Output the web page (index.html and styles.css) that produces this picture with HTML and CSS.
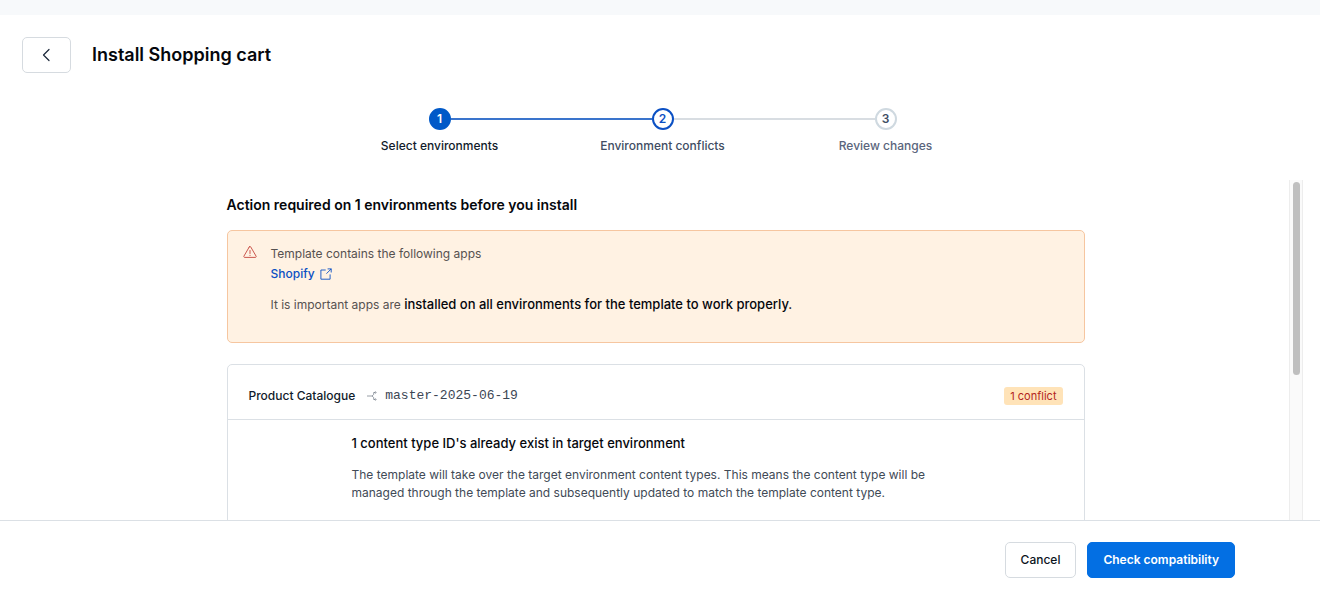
FILE: index.html
```html
<!DOCTYPE html>
<html lang="en">
<head>
<meta charset="utf-8">
<meta name="viewport" content="width=device-width, initial-scale=1">
<title>Install Shopping cart</title>
<link rel="stylesheet" href="styles.css">
</head>
<body>
<div class="backdrop"></div>
<header class="header">
  <button class="btn btn-back" type="button" aria-label="Back">
    <svg width="16" height="16" viewBox="0 0 16 16" fill="none" stroke="currentColor" stroke-width="1.2" stroke-linecap="round" stroke-linejoin="round"><path d="M10 2.500 4.500 8l5.500 5.500"/></svg>
  </button>
  <h1 class="title">Install Shopping cart</h1>
</header>
<ol class="stepper">
  <li class="step step-active">
    <div class="rail"><span class="line line-none"></span><span class="dot">1</span><span class="line line-done"></span></div>
    <span class="step-label">Select environments</span>
  </li>
  <li class="step step-next">
    <div class="rail"><span class="line line-done"></span><span class="dot">2</span><span class="line"></span></div>
    <span class="step-label">Environment conflicts</span>
  </li>
  <li class="step">
    <div class="rail"><span class="line"></span><span class="dot">3</span><span class="line line-none"></span></div>
    <span class="step-label">Review changes</span>
  </li>
</ol>
<div class="viewport">
  <main class="content">
    <h2 class="heading">Action required on 1 environments before you install</h2>
    <section class="note">
      <svg class="note-icon" width="14" height="16" viewBox="0 -1 14 16" fill="none" stroke="currentColor" stroke-width=".9" stroke-linecap="round" stroke-linejoin="round"><path d="M6.300 1.900.9 11.200a.8.8 0 0 0 .7 1.200h10.800a.8.8 0 0 0 .7-1.200L7.700 1.900a.8.8 0 0 0-1.400 0Z"/><path d="M7 5.500v3M7 10.300v.2"/></svg>
      <div>
        <p class="note-text">Template contains the following apps</p>
        <a class="link" href="#shopify">Shopify
          <svg width="12" height="12" viewBox="0 0 12 12" fill="none" stroke="currentColor" stroke-width=".9" stroke-linecap="round" stroke-linejoin="round"><path d="M8 .9h3.200v3.200M6.700 5.400l4.400-4.400M5.300 2H.9v9.200h9.200V6.800"/></svg>
        </a>
        <p class="note-text note-last">It is important apps are <strong>installed on all environments for the template to work properly.</strong></p>
      </div>
    </section>
    <section class="card">
      <div class="card-head">
        <span class="space">Product Catalogue</span>
        <svg class="branch" width="10" height="10" viewBox="0 0 10 10" fill="none" stroke="currentColor" stroke-width=".8"><path d="M0 5h5M8 1.500H6.700V3.500L5 5l1.700 1.500v2H8"/><circle cx="8.400" cy="1.500" r=".7"/><circle cx="8.400" cy="8.500" r=".7"/></svg>
        <span class="env">master-2025-06-19</span>
        <span class="badge">1 conflict</span>
      </div>
      <div class="card-body">
        <h3 class="card-title">1 content type ID's already exist in target environment</h3>
        <p class="card-text">The template will take over the target environment content types. This means the content type will be managed through the template and subsequently updated to match the template content type.</p>
      </div>
    </section>
  </main>
  <div class="track"><div class="thumb"></div></div>
</div>
<footer class="footer">
  <button class="btn" type="button">Cancel</button>
  <button class="btn btn-primary" type="button">Check compatibility</button>
</footer>
</body>
</html>
```
FILE: styles.css
```css
* { box-sizing: border-box; margin: 0; padding: 0; }
body {
  display: flex;
  flex-direction: column;
  height: 100vh;
  background: #fff;
  color: #0c141c;
  font: 400 12px/18px Inter, "Liberation Sans", sans-serif;
}
.backdrop { flex: none; height: 15px; background: #f7f9fb; }
.header { display: flex; align-items: center; gap: 21px; padding: 22px 22px 0; }
.title { font-size: 18px; line-height: 24px; font-weight: 600; color: #05070c; }
.btn {
  display: inline-flex;
  align-items: center;
  justify-content: center;
  height: 36px;
  padding: 0 15px;
  border: 1px solid #d6dbe0;
  border-radius: 5px;
  background: #fff;
  color: #0c141c;
  font: inherit;
  font-weight: 500;
}
.btn-back { width: 49px; padding: 0; color: #1b273a; }
.btn-primary { border-color: #036fe3; background: #036fe3; color: #fff; font-weight: 600; }
.stepper {
  display: grid;
  grid-template-columns: repeat(3, 223px);
  justify-content: center;
  margin: 35px 17px 0 22px;
  list-style: none;
}
.step { text-align: center; color: #5a657c; }
.step-label { font-weight: 500; }
.rail { display: flex; align-items: center; margin-bottom: 7px; }
.line { flex: 1; height: 2px; background: #d8dde2; }
.line-done { background: #3a74cc; }
.line-none { background: none; }
.dot {
  width: 22px;
  height: 22px;
  border: 2px solid #cfd9e0;
  border-radius: 50%;
  font-weight: 600;
  color: #414d63;
}
.step-active { color: #111b2b; }
.step-active .dot { border-color: #0059c8; background: #0059c8; color: #fff; }
.step-next { color: #414d63; }
.step-next .dot { border-color: #0b50c4; color: #0b50c4; }
.viewport { display: flex; flex: 1; min-height: 0; margin: 25px 17px 0 22px; overflow: hidden; }
.content { flex: 1; max-width: 858px; margin: 0 auto; padding-top: 15px; }
.heading { font-size: 14px; line-height: 20px; font-weight: 600; color: #05070c; }
.note {
  display: flex;
  gap: 14px;
  margin-top: 15px;
  padding: 13px 15px 27px;
  border: 1px solid #f6c6a0;
  border-radius: 5px;
  background: #fff2e3;
}
.note-icon { flex: none; color: #c4453c; }
.note-text { line-height: 20px; color: #565150; }
.note-last { margin-top: 10px; }
.note strong { font-size: 13px; font-weight: 500; color: #05070c; }
.link { display: flex; align-items: center; gap: 5px; line-height: 20px; font-weight: 500; color: #0b50c4; text-decoration: none; }
.card { margin-top: 21px; border: 1px solid #dbe0e5; border-radius: 5px; }
.card-head { display: flex; align-items: center; padding: 22px 21px 14px; border-bottom: 1px solid #dbe0e5; }
.space { font-weight: 500; color: #111b2b; }
.branch { margin: 0 8px 0 12px; color: #7d8590; }
.env { color: #3c4654; font-size: 13px; font-family: "Liberation Mono", monospace; }
.badge { margin-left: auto; padding: 0 6px; border-radius: 3px; background: #ffe3b8; color: #b3261e; font-size: 11px; }
.card-body { padding: 14px 124px 29px; }
.card-title { font-size: 13px; font-weight: 500; color: #05070c; }
.card-text { margin-top: 14px; color: #414a56; }
.track { flex: none; width: 14px; padding: 2px 3px 0; border: solid #ededed; border-width: 0 1px; background: #fafafa; }
.thumb { width: 7px; height: 193px; border-radius: 4px; background: #bfbfbf; }
.footer { display: flex; flex: none; justify-content: flex-end; gap: 11px; padding: 21px 85px 17px; border-top: 1px solid #dbe0e5; }
```
